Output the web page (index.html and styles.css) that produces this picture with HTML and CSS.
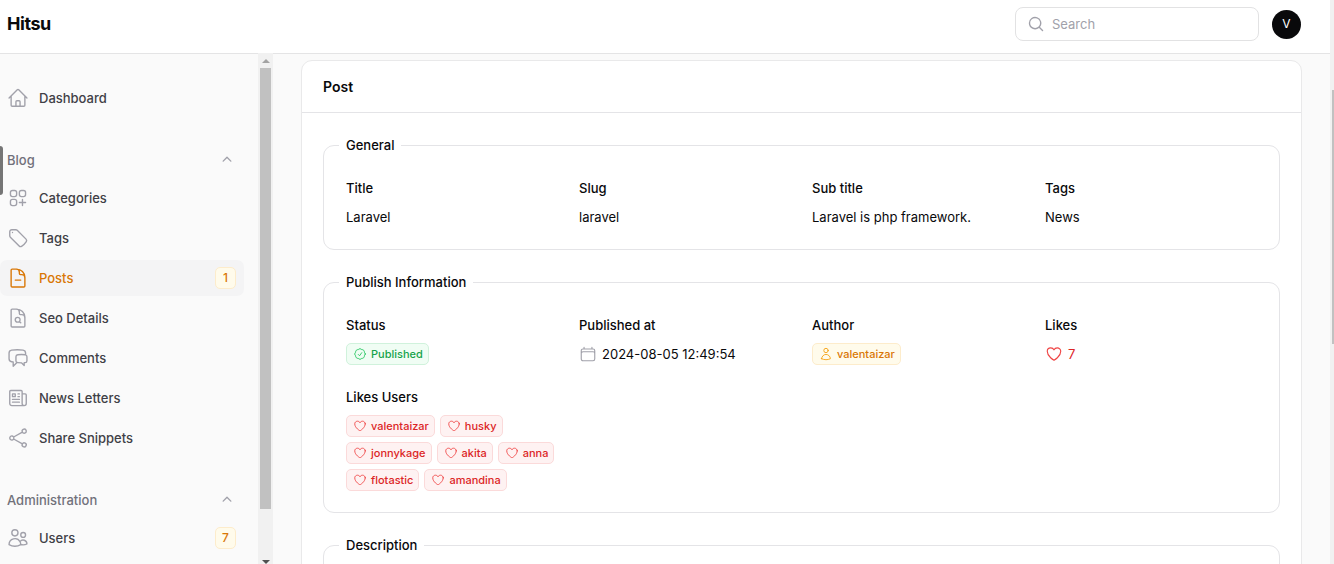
FILE: index.html
```html
<!DOCTYPE html>
<html lang="en">
<head>
<meta charset="utf-8">
<meta name="viewport" content="width=device-width, initial-scale=1">
<title>Post - Hitsu</title>
<link rel="stylesheet" href="styles.css">
</head>
<body>
<svg class="sprite" aria-hidden="true">
  <symbol id="home" viewBox="0 0 24 24"><path d="m2.25 12 8.954-8.955c.44-.439 1.152-.439 1.591 0L21.75 12M4.5 9.75v10.125c0 .621.504 1.125 1.125 1.125H9.75v-4.875c0-.621.504-1.125 1.125-1.125h2.25c.621 0 1.125.504 1.125 1.125V21h4.125c.621 0 1.125-.504 1.125-1.125V9.75M8.25 21h8.25"/></symbol>
  <symbol id="squares" viewBox="0 0 24 24"><path d="M13.5 16.875h3.375m0 0h3.375m-3.375 0V13.5m0 3.375v3.375M6 10.5h2.25a2.25 2.25 0 0 0 2.25-2.25V6a2.25 2.25 0 0 0-2.25-2.25H6A2.25 2.25 0 0 0 3.75 6v2.25A2.25 2.25 0 0 0 6 10.5Zm0 9.75h2.25A2.25 2.25 0 0 0 10.5 18v-2.25a2.25 2.25 0 0 0-2.25-2.25H6a2.25 2.25 0 0 0-2.25 2.25V18A2.25 2.25 0 0 0 6 20.25Zm9.75-9.75H18a2.25 2.25 0 0 0 2.25-2.25V6A2.25 2.25 0 0 0 18 3.75h-2.25A2.25 2.25 0 0 0 13.5 6v2.25a2.25 2.25 0 0 0 2.25 2.25Z"/></symbol>
  <symbol id="tag" viewBox="0 0 24 24"><path d="M9.568 3H5.25A2.25 2.25 0 0 0 3 5.25v4.318c0 .597.237 1.17.659 1.591l9.581 9.581c.699.699 1.78.872 2.607.33a18.095 18.095 0 0 0 5.223-5.223c.542-.827.369-1.908-.33-2.607L11.16 3.66A2.25 2.25 0 0 0 9.568 3Z"/><path d="M6 6h.008v.008H6V6Z"/></symbol>
  <symbol id="doc-minus" viewBox="0 0 24 24"><path d="M19.5 14.25v-2.625a3.375 3.375 0 0 0-3.375-3.375h-1.5A1.125 1.125 0 0 1 13.5 7.125v-1.5a3.375 3.375 0 0 0-3.375-3.375H8.25m6.75 12H9m1.5-12H5.625c-.621 0-1.125.504-1.125 1.125v17.25c0 .621.504 1.125 1.125 1.125h12.75c.621 0 1.125-.504 1.125-1.125V11.25a9 9 0 0 0-9-9Z"/></symbol>
  <symbol id="doc-search" viewBox="0 0 24 24"><path d="M19.5 14.25v-2.625a3.375 3.375 0 0 0-3.375-3.375h-1.5A1.125 1.125 0 0 1 13.5 7.125v-1.5a3.375 3.375 0 0 0-3.375-3.375H8.25m5.231 13.481L15 17.25m-4.5-15H5.625c-.621 0-1.125.504-1.125 1.125v17.25c0 .621.504 1.125 1.125 1.125h12.75c.621 0 1.125-.504 1.125-1.125V11.25a9 9 0 0 0-9-9Zm3.75 11.625a2.625 2.625 0 1 1-5.25 0 2.625 2.625 0 0 1 5.25 0Z"/></symbol>
  <symbol id="chat" viewBox="0 0 24 24"><path d="M20.25 8.511c.884.284 1.5 1.128 1.5 2.097v4.286c0 1.136-.847 2.1-1.98 2.193-.34.027-.68.052-1.02.072v3.091l-3-3c-1.354 0-2.694-.055-4.02-.163a2.115 2.115 0 0 1-.825-.242m9.345-8.334a2.126 2.126 0 0 0-.476-.095 48.64 48.64 0 0 0-8.048 0c-1.131.094-1.976 1.057-1.976 2.192v4.286c0 .837.46 1.58 1.155 1.951m9.345-8.334V6.637c0-1.621-1.152-3.026-2.76-3.235A48.455 48.455 0 0 0 11.25 3c-2.115 0-4.198.137-6.24.402-1.608.209-2.76 1.614-2.76 3.235v6.226c0 1.621 1.152 3.026 2.76 3.235.577.075 1.157.14 1.74.194V21l4.155-4.155"/></symbol>
  <symbol id="news" viewBox="0 0 24 24"><path d="M12 7.5h1.5m-1.5 3h1.5m-7.5 3h7.5m-7.5 3h7.5m3-9h3.375c.621 0 1.125.504 1.125 1.125V18a2.25 2.25 0 0 1-2.25 2.25M16.5 7.5V18a2.25 2.25 0 0 0 2.25 2.25M16.5 7.5V4.875c0-.621-.504-1.125-1.125-1.125H4.125C3.504 3.75 3 4.254 3 4.875V18a2.25 2.25 0 0 0 2.25 2.25h13.5M6 7.5h3v3H6v-3Z"/></symbol>
  <symbol id="share" viewBox="0 0 24 24"><path d="M7.217 10.907a2.25 2.25 0 1 0 0 2.186m0-2.186c.18.324.283.696.283 1.093s-.103.77-.283 1.093m0-2.186 9.566-5.314m-9.566 7.5 9.566 5.314m0 0a2.25 2.25 0 1 0 3.935 2.186 2.25 2.25 0 0 0-3.935-2.186Zm0-12.814a2.25 2.25 0 1 0 3.933-2.185 2.25 2.25 0 0 0-3.933 2.185Z"/></symbol>
  <symbol id="users" viewBox="0 0 24 24"><path d="M15 19.128a9.38 9.38 0 0 0 2.625.372 9.337 9.337 0 0 0 4.121-.952 4.125 4.125 0 0 0-7.533-2.493M15 19.128v-.003c0-1.113-.285-2.16-.786-3.07M15 19.128v.106A12.318 12.318 0 0 1 8.624 21c-2.331 0-4.512-.645-6.374-1.766l-.001-.109a6.375 6.375 0 0 1 11.964-3.07M12 6.375a3.375 3.375 0 1 1-6.75 0 3.375 3.375 0 0 1 6.75 0Zm8.25 2.25a2.625 2.625 0 1 1-5.25 0 2.625 2.625 0 0 1 5.25 0Z"/></symbol>
  <symbol id="user" viewBox="0 0 24 24"><path d="M15.75 6a3.75 3.75 0 1 1-7.5 0 3.75 3.75 0 0 1 7.5 0ZM4.501 20.118a7.5 7.5 0 0 1 14.998 0A17.933 17.933 0 0 1 12 21.75c-2.676 0-5.216-.584-7.499-1.632Z"/></symbol>
  <symbol id="calendar" viewBox="0 0 24 24"><path d="M6.75 3v2.25M17.25 3v2.25M3 18.75V7.5a2.25 2.25 0 0 1 2.25-2.25h13.5A2.25 2.25 0 0 1 21 7.5v11.25m-18 0A2.25 2.25 0 0 0 5.25 21h13.5A2.25 2.25 0 0 0 21 18.75m-18 0v-7.5A2.25 2.25 0 0 1 5.25 9h13.5A2.25 2.25 0 0 1 21 11.25v7.5"/></symbol>
  <symbol id="heart" viewBox="0 0 24 24"><path d="M21 8.25c0-2.485-2.099-4.5-4.688-4.5-1.935 0-3.597 1.126-4.312 2.733-.715-1.607-2.377-2.733-4.313-2.733C5.1 3.75 3 5.765 3 8.25c0 7.22 9 12 9 12s9-4.78 9-12Z"/></symbol>
  <symbol id="check-badge" viewBox="0 0 24 24"><path d="M9 12.75 11.25 15 15 9.75M21 12c0 1.268-.63 2.39-1.593 3.068a3.745 3.745 0 0 1-1.043 3.296 3.745 3.745 0 0 1-3.296 1.043A3.745 3.745 0 0 1 12 21c-1.268 0-2.39-.63-3.068-1.593a3.746 3.746 0 0 1-3.296-1.043 3.745 3.745 0 0 1-1.043-3.296A3.745 3.745 0 0 1 3 12c0-1.268.63-2.39 1.593-3.068a3.745 3.745 0 0 1 1.043-3.296 3.746 3.746 0 0 1 3.296-1.043A3.746 3.746 0 0 1 12 3c1.268 0 2.39.63 3.068 1.593a3.746 3.746 0 0 1 3.296 1.043 3.746 3.746 0 0 1 1.043 3.296A3.745 3.745 0 0 1 21 12Z"/></symbol>
  <symbol id="search" viewBox="0 0 20 20"><path fill="currentColor" stroke="none" fill-rule="evenodd" clip-rule="evenodd" d="M9 3.5a5.5 5.5 0 1 0 0 11 5.5 5.5 0 0 0 0-11ZM2 9a7 7 0 1 1 12.452 4.391l3.328 3.329a.75.75 0 1 1-1.06 1.06l-3.329-3.328A7 7 0 0 1 2 9Z"/></symbol>
  <symbol id="chevron" viewBox="0 0 20 20"><path fill="currentColor" stroke="none" fill-rule="evenodd" clip-rule="evenodd" d="M9.47 6.47a.75.75 0 0 1 1.06 0l4.25 4.25a.75.75 0 1 1-1.06 1.06L10 8.06l-3.72 3.72a.75.75 0 0 1-1.06-1.06l4.25-4.25Z"/></symbol>
</svg>

<div class="page">
  <div class="app">
    <header class="topbar">
      <a class="brand" href="#">Hitsu</a>
      <label class="search">
        <svg class="icon icon-search"><use href="#search"/></svg>
        <input class="search-input" type="search" placeholder="Search" aria-label="Search">
      </label>
      <button class="avatar" type="button" aria-label="User menu">V</button>
    </header>

    <div class="body">
      <nav class="sidebar">
        <a class="nav-item" href="#"><svg class="icon"><use href="#home"/></svg><span class="nav-label">Dashboard</span></a>
        <section class="nav-group">
          <button class="group-toggle" type="button">Blog<svg class="icon icon-chevron"><use href="#chevron"/></svg></button>
          <a class="nav-item" href="#"><svg class="icon"><use href="#squares"/></svg><span class="nav-label">Categories</span></a>
          <a class="nav-item" href="#"><svg class="icon"><use href="#tag"/></svg><span class="nav-label">Tags</span></a>
          <a class="nav-item nav-item-active" href="#"><svg class="icon"><use href="#doc-minus"/></svg><span class="nav-label">Posts</span><span class="count">1</span></a>
          <a class="nav-item" href="#"><svg class="icon"><use href="#doc-search"/></svg><span class="nav-label">Seo Details</span></a>
          <a class="nav-item" href="#"><svg class="icon"><use href="#chat"/></svg><span class="nav-label">Comments</span></a>
          <a class="nav-item" href="#"><svg class="icon"><use href="#news"/></svg><span class="nav-label">News Letters</span></a>
          <a class="nav-item" href="#"><svg class="icon"><use href="#share"/></svg><span class="nav-label">Share Snippets</span></a>
        </section>
        <section class="nav-group">
          <button class="group-toggle" type="button">Administration<svg class="icon icon-chevron"><use href="#chevron"/></svg></button>
          <a class="nav-item" href="#"><svg class="icon"><use href="#users"/></svg><span class="nav-label">Users</span><span class="count">7</span></a>
        </section>
      </nav>
      <div class="side-scroll" aria-hidden="true">
        <span class="arrow arrow-up"></span>
        <span class="side-thumb"></span>
        <span class="arrow arrow-down"></span>
      </div>

      <main class="content">
        <article class="card">
          <h1 class="card-title">Post</h1>
          <div class="card-body">
            <fieldset class="panel">
              <legend class="panel-title">General</legend>
              <dl class="fields">
                <div class="field"><dt>Title</dt><dd>Laravel</dd></div>
                <div class="field"><dt>Slug</dt><dd>laravel</dd></div>
                <div class="field"><dt>Sub title</dt><dd>Laravel is php framework.</dd></div>
                <div class="field"><dt>Tags</dt><dd>News</dd></div>
              </dl>
            </fieldset>

            <fieldset class="panel">
              <legend class="panel-title">Publish Information</legend>
              <dl class="fields">
                <div class="field"><dt>Status</dt><dd><span class="badge badge-green"><svg class="icon"><use href="#check-badge"/></svg>Published</span></dd></div>
                <div class="field"><dt>Published at</dt><dd class="with-icon"><svg class="icon"><use href="#calendar"/></svg>2024-08-05 12:49:54</dd></div>
                <div class="field"><dt>Author</dt><dd><span class="badge badge-amber"><svg class="icon"><use href="#user"/></svg>valentaizar</span></dd></div>
                <div class="field"><dt>Likes</dt><dd class="with-icon likes"><svg class="icon"><use href="#heart"/></svg>7</dd></div>
                <div class="field">
                  <dt>Likes Users</dt>
                  <dd class="badge-list">
                    <span class="badge badge-red"><svg class="icon"><use href="#heart"/></svg>valentaizar</span>
                    <span class="badge badge-red"><svg class="icon"><use href="#heart"/></svg>husky</span>
                    <span class="badge badge-red"><svg class="icon"><use href="#heart"/></svg>jonnykage</span>
                    <span class="badge badge-red"><svg class="icon"><use href="#heart"/></svg>akita</span>
                    <span class="badge badge-red"><svg class="icon"><use href="#heart"/></svg>anna</span>
                    <span class="badge badge-red"><svg class="icon"><use href="#heart"/></svg>flotastic</span>
                    <span class="badge badge-red"><svg class="icon"><use href="#heart"/></svg>amandina</span>
                  </dd>
                </div>
              </dl>
            </fieldset>

            <fieldset class="panel">
              <legend class="panel-title">Description</legend>
            </fieldset>
          </div>
        </article>
      </main>
    </div>
  </div>
  <div class="page-scroll" aria-hidden="true"><span class="page-thumb"></span></div>
  <span class="edge-handle" aria-hidden="true"></span>
</div>
</body>
</html>
```
FILE: styles.css
```css
* { box-sizing: border-box; }

body {
  margin: 0;
  background: #fafafa;
  color: #09090b;
  font: 400 13px/22px Inter, "Liberation Sans", sans-serif;
}

a { color: inherit; text-decoration: none; }
button { border: 0; background: none; font: inherit; color: inherit; cursor: pointer; }
dl, dd { margin: 0; }

.sprite { position: absolute; width: 0; height: 0; }

.icon {
  flex: none;
  width: 22px;
  height: 22px;
  fill: none;
  stroke: currentColor;
  stroke-width: 1.5;
  stroke-linecap: round;
  stroke-linejoin: round;
  color: #a1a1aa;
}

.page {
  position: relative;
  display: flex;
  height: 100vh;
  overflow: hidden;
}

.app {
  flex: 1;
  min-width: 0;
  display: flex;
  flex-direction: column;
}

/* Top bar */
.topbar {
  flex: none;
  display: flex;
  align-items: center;
  gap: 13px;
  padding: 7px 29px 12px 7px;
  background: #fff;
  border-bottom: 1px solid #e4e4e5;
}

.brand {
  margin-right: auto;
  font-size: 18px;
  font-weight: 700;
  letter-spacing: -0.025em;
}

.search {
  display: flex;
  align-items: center;
  gap: 7px;
  width: 244px;
  height: 34px;
  padding: 0 11px;
  border: 1px solid #e2e2e3;
  border-radius: 8px;
}

.icon-search { width: 18px; height: 18px; }

.search-input {
  flex: 1;
  min-width: 0;
  padding: 0;
  border: 0;
  outline: 0;
  background: none;
  font: inherit;
}
.search-input::placeholder { color: #a1a1aa; }

.avatar {
  width: 29px;
  height: 29px;
  padding: 0;
  border-radius: 50%;
  background: #09090b;
  color: #fff;
  font-size: 12px;
}

/* Sidebar */
.body {
  flex: 1;
  min-height: 0;
  display: flex;
}

.sidebar {
  flex: none;
  width: 258px;
  padding: 26px 14px 0 0;
  overflow: hidden;
}

.nav-group {
  display: flex;
  flex-direction: column;
  gap: 4px;
  margin-top: 24px;
}

.group-toggle {
  display: flex;
  align-items: center;
  justify-content: space-between;
  height: 36px;
  padding: 3px 8px 0 7px;
  color: #71717a;
  font-weight: 500;
}
.icon-chevron { width: 18px; height: 18px; }

.nav-item {
  display: flex;
  align-items: center;
  gap: 10px;
  height: 36px;
  padding: 0 8px 0 7px;
  border-radius: 7px;
  color: #3f3f46;
  font-weight: 500;
}
.nav-label { flex: 1; }

.nav-item-active { background: #f4f4f5; color: #d97706; }
.nav-item-active .icon { color: #d97706; }

.count {
  width: 21px;
  border: 1px solid #fdeccb;
  border-radius: 5px;
  background: #fffbeb;
  color: #d97706;
  font-size: 12px;
  line-height: 20px;
  text-align: center;
}

.side-scroll {
  z-index: 1;
  flex: none;
  display: flex;
  flex-direction: column;
  align-items: center;
  width: 15px;
  margin-top: -1px;
  background: #f1f1f1;
}
.side-thumb { flex: 1; width: 11px; margin-bottom: 51px; background: #c1c1c1; }
.arrow { flex: none; border: 4px solid transparent; border-top: 0; border-bottom: 0; }
.arrow-up { margin: 6px 0 5px; border-bottom: 4px solid #a3a3a3; }
.arrow-down { height: 3px; border-top: 4px solid #505050; }

/* Record card */
.content {
  flex: 1;
  min-width: 0;
  padding: 6px 28px 0;
  overflow: hidden;
}

.card {
  background: #fff;
  border: 1px solid #e9e9ea;
  border-radius: 11px;
}

.card-title {
  margin: 0;
  padding: 15px 21px 14px;
  border-bottom: 1px solid #e4e4e7;
  font-size: 14px;
  font-weight: 600;
}

.card-body {
  display: flex;
  flex-direction: column;
  gap: 21px;
  padding: 21px;
}

.panel {
  min-width: 0;
  margin: 0;
  padding: 21px 22px;
  border: 1px solid #e4e4e7;
  border-radius: 11px;
}

.panel-title {
  margin-left: -7px;
  padding: 0 7px;
  font-weight: 500;
}

.fields {
  display: grid;
  grid-template-columns: repeat(4, minmax(0, 1fr));
  gap: 21px;
}

.field {
  display: flex;
  flex-direction: column;
  gap: 7px;
}
.field dt { font-weight: 500; }
.field dd { display: flex; align-items: center; }
.field .badge-list { flex-wrap: wrap; gap: 5px; }

.with-icon { gap: 5px; }
.with-icon .icon { width: 18px; height: 18px; }
.likes { color: #dc2626; }
.likes .icon { color: #ef4444; }

.badge {
  display: inline-flex;
  align-items: center;
  gap: 4px;
  padding: 0 5px 0 6px;
  border: 1px solid;
  border-radius: 5px;
  font-size: 11px;
  font-weight: 500;
  line-height: 20px;
}
.badge .icon { width: 14px; height: 14px; }

.badge-green { border-color: #d0f2dc; background: #f0fdf4; color: #16a34a; }
.badge-green .icon { color: #22c55e; }
.badge-amber { border-color: #fdeccb; background: #fffbeb; color: #d97706; }
.badge-amber .icon { color: #f59e0b; }
.badge-red { border-color: #fbdada; background: #fef2f2; color: #dc2626; }
.badge-red .icon { color: #ef4444; }

/* Page edges */
.page-scroll {
  flex: none;
  width: 4px;
  padding: 90px 0 0 2px;
  background: #f1f1f1;
}
.page-thumb { display: block; height: 254px; background: #c1c1c1; }

.edge-handle {
  position: absolute;
  top: 146px;
  left: 0;
  width: 3px;
  height: 49px;
  border-radius: 0 3px 3px 0;
  background: #757575;
}
```
